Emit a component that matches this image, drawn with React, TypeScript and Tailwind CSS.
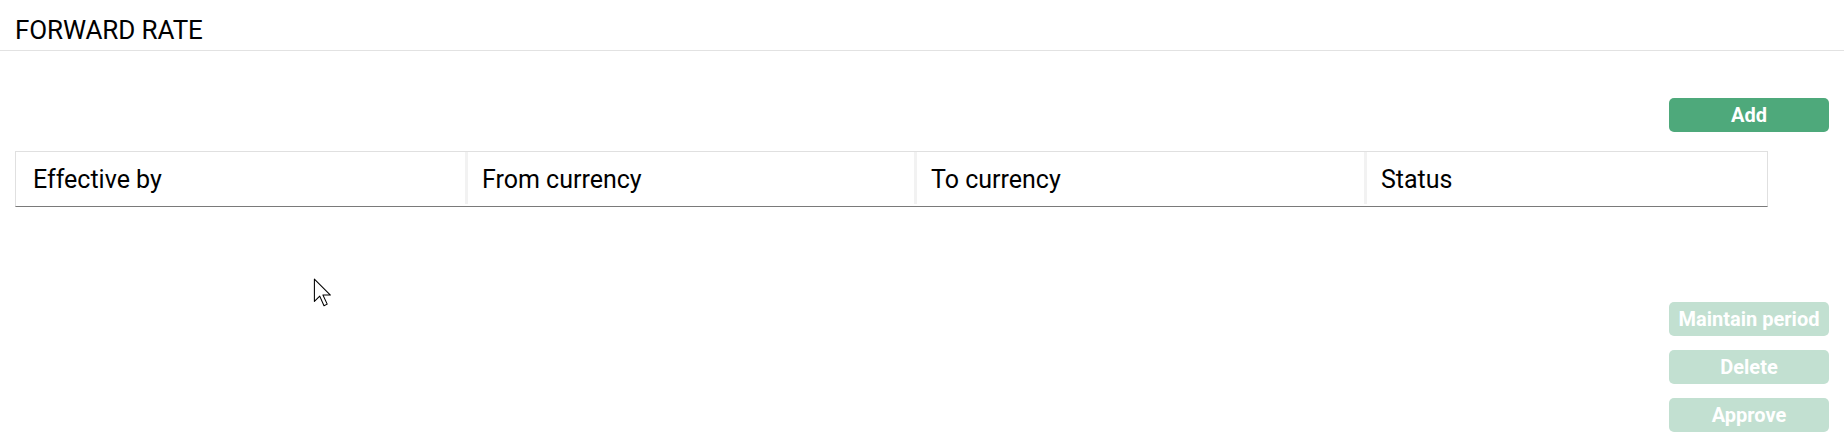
import React from "react";

const cols = [
  { label: "Effective by", w: "w-[449px]" },
  { label: "From currency", w: "w-[449px]" },
  { label: "To currency", w: "w-[450px]" },
  { label: "Status", w: "flex-1" },
];

export default function App() {
  return (
    <div className="relative w-[1844px] h-[448px] bg-white text-black font-['Roboto',sans-serif] overflow-hidden">
      <div className="h-[51px] border-b border-[#e2e2e2] pl-[15px] pt-[15px]">
        <h1 className="text-[26px] leading-[30px] font-normal tracking-[-0.1px]">FORWARD RATE</h1>
      </div>
      <div className="flex flex-col px-[15px]">
        <div className="flex justify-end pt-[47px]">
          <button className="w-[160px] h-[34px] rounded-[5px] bg-[#4ea97b] text-white text-[20px] font-bold leading-none">
            Add
          </button>
        </div>
        <div className="mt-[19px] w-[1753px] h-[56px] flex border border-[#e0e0e0] border-b-[#7a7a7a]">
          {cols.map((c, i) => (
            <div key={c.label} className={`${c.w} flex items-stretch`}>
              {i > 0 && <div className="w-[3px] bg-[#f2f2f2] mb-[2px]" />}
              <div className={`flex items-center pt-[2px] text-[25px] ${i > 0 ? "pl-[14px]" : "pl-[17px]"}`}>{c.label}</div>
            </div>
          ))}
        </div>
        <div className="mt-[95px] flex flex-col items-end gap-[14px]">
          {["Maintain period", "Delete", "Approve"].map((t) => (
            <button key={t} className="w-[160px] h-[34px] rounded-[5px] bg-[#c2e0d1] text-white text-[20px] font-bold leading-none">
              {t}
            </button>
          ))}
        </div>
      </div>
      <svg className="absolute left-[313px] top-[278px]" width="22" height="32" viewBox="0 0 20 30">
        <path d="M1 1 L1 22 L6 17 L10 26 L13 24.5 L9 16 L16 16 Z" fill="white" stroke="black" strokeWidth="1" strokeLinejoin="round" />
      </svg>
    </div>
  );
}
